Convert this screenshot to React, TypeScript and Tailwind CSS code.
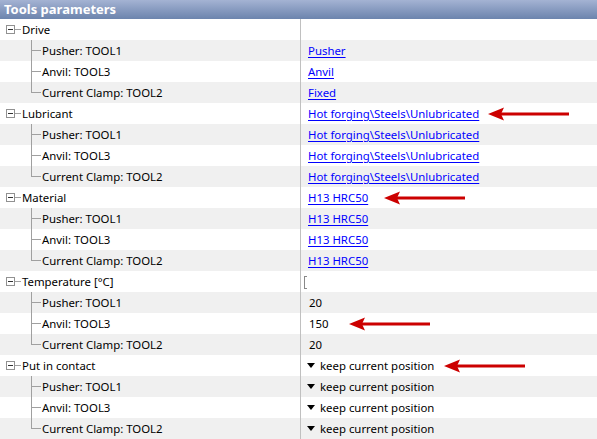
import React from 'react';

type Value =
    | { kind: 'link'; text: string }
    | { kind: 'plain'; text: string }
    | { kind: 'drop'; text: string }
    | { kind: 'input' }
    | { kind: 'none' };

interface Group {
    name: string;
    value: Value;
    arrowGap?: number;
    children: Value[];
}

const tools = ['Pusher: TOOL1', 'Anvil: TOOL3', 'Current Clamp: TOOL2'];

const groups: Group[] = [
    {
        name: 'Drive',
        value: { kind: 'none' },
        children: [
            { kind: 'link', text: 'Pusher' },
            { kind: 'link', text: 'Anvil' },
            { kind: 'link', text: 'Fixed' },
        ],
    },
    {
        name: 'Lubricant',
        value: { kind: 'link', text: 'Hot forging\\Steels\\Unlubricated' },
        arrowGap: 9,
        children: [
            { kind: 'link', text: 'Hot forging\\Steels\\Unlubricated' },
            { kind: 'link', text: 'Hot forging\\Steels\\Unlubricated' },
            { kind: 'link', text: 'Hot forging\\Steels\\Unlubricated' },
        ],
    },
    {
        name: 'Material',
        value: { kind: 'link', text: 'H13 HRC50' },
        arrowGap: 16,
        children: [
            { kind: 'link', text: 'H13 HRC50' },
            { kind: 'link', text: 'H13 HRC50' },
            { kind: 'link', text: 'H13 HRC50' },
        ],
    },
    {
        name: 'Temperature [°C]',
        value: { kind: 'input' },
        children: [
            { kind: 'plain', text: '20' },
            { kind: 'plain', text: '150' },
            { kind: 'plain', text: '20' },
        ],
    },
    {
        name: 'Put in contact',
        value: { kind: 'drop', text: 'keep current position' },
        arrowGap: 10,
        children: [
            { kind: 'drop', text: 'keep current position' },
            { kind: 'drop', text: 'keep current position' },
            { kind: 'drop', text: 'keep current position' },
        ],
    },
];

const Arrow: React.FC<{ gap: number }> = ({ gap }) => (
    <svg width="82" height="14" viewBox="0 0 82 14" style={{ marginLeft: gap }} className="shrink-0">
        <line x1="12" y1="7" x2="81" y2="7" stroke="#cc0000" strokeWidth="3" />
        <path d="M0 7 L16 0.5 L13 7 L16 13.5 Z" fill="#cc0000" />
    </svg>
);

const ValueCell: React.FC<{ value: Value }> = ({ value }) => {
    switch (value.kind) {
        case 'link':
            return <span className="text-[#0000ff] underline underline-offset-[2px]">{value.text}</span>;
        case 'plain':
            return <span className="ml-[1px]">{value.text}</span>;
        case 'drop':
            return (
                <span className="flex items-center">
                    <svg width="8" height="5" viewBox="0 0 8 5" className="mr-[5px] ml-[-1px]">
                        <path d="M0 0 H8 L4 5 Z" fill="#000" />
                    </svg>
                    {value.text}
                </span>
            );
        case 'input':
            return (
                <span className="ml-[-4px] mt-[2px] h-[13px] w-[3px] border border-r-0 border-[#888]" />
            );
        default:
            return null;
    }
};

export default function App() {
    let rowIndex = 0;

    return (
        <div
            className="w-[597px] h-[439px] overflow-hidden bg-white text-[11.4px] text-black"
            style={{ fontFamily: '"Noto Sans", "Open Sans", sans-serif' }}
        >
            {/* header */}
            <div className="h-[19px] flex items-center px-[4px] bg-gradient-to-b from-[#a4b3d3] to-[#6c84ad] text-white font-bold text-[13px]">
                Tools parameters
            </div>

            <div className="relative">
                {/* main tree trunk */}
                <div className="absolute left-[10px] top-[10px] bottom-0 w-px bg-[#a0a0a0]" />

                {groups.map((g) => {
                    const groupRow = rowIndex++;
                    return (
                        <div key={g.name} className="relative">
                            {/* children connector */}
                            <div className="absolute left-[31px] top-[21px] h-[52px] w-px bg-[#a0a0a0]" />

                            <div className={`h-[21px] flex ${groupRow % 2 ? 'bg-[#f0f0f0]' : 'bg-white'}`}>
                                <div className="w-[300px] shrink-0 flex items-center relative">
                                    <div className="ml-[6px] z-10 w-[9px] h-[9px] border border-[#919191] bg-white flex items-center justify-center">
                                        <div className="w-[5px] h-px bg-[#333]" />
                                    </div>
                                    <div className="w-[6px] h-px bg-[#a0a0a0]" />
                                    <span className="ml-[1px]">{g.name}</span>
                                </div>
                                <div className="flex-1 flex items-center border-l border-[#c0c0c0] pl-[7px]">
                                    <ValueCell value={g.value} />
                                    {g.arrowGap !== undefined && <Arrow gap={g.arrowGap} />}
                                </div>
                            </div>

                            {g.children.map((c, i) => {
                                const idx = rowIndex++;
                                const isTempAnvil = g.name.startsWith('Temperature') && i === 1;
                                return (
                                    <div key={i} className={`h-[21px] flex ${idx % 2 ? 'bg-[#f0f0f0]' : 'bg-white'}`}>
                                        <div className="w-[300px] shrink-0 flex items-center">
                                            <div className="ml-[31px] w-[10px] h-px bg-[#a0a0a0]" />
                                            <span className="ml-[1px]">{tools[i]}</span>
                                        </div>
                                        <div className="flex-1 flex items-center border-l border-[#c0c0c0] pl-[7px]">
                                            <ValueCell value={c} />
                                            {isTempAnvil && <Arrow gap={20} />}
                                        </div>
                                    </div>
                                );
                            })}
                        </div>
                    );
                })}
            </div>
        </div>
    );
}
